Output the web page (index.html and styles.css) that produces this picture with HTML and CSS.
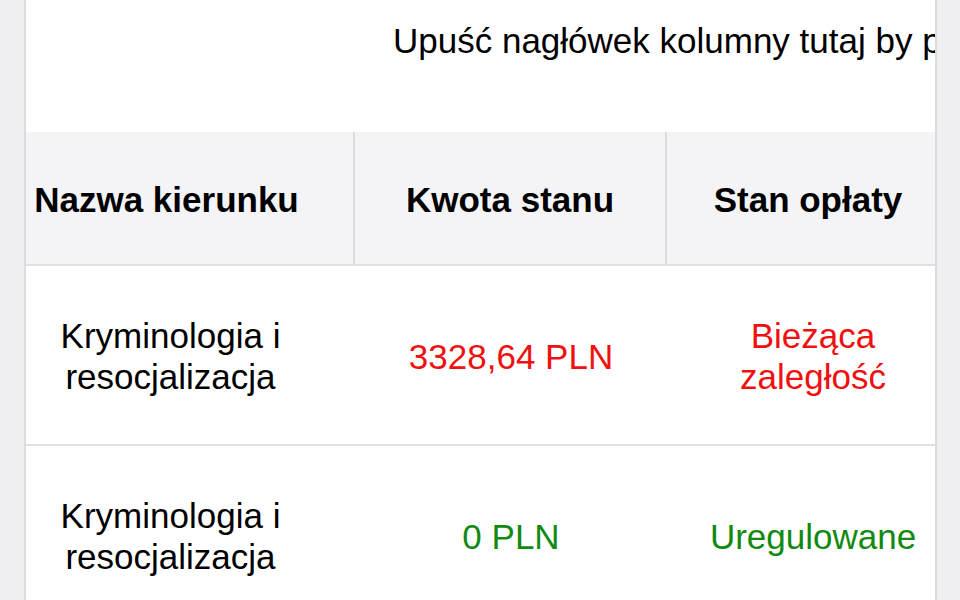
FILE: index.html
```html
<!DOCTYPE html>
<html lang="pl">
<head>
<meta charset="utf-8">
<title>Opłaty</title>
<link rel="stylesheet" href="styles.css">
</head>
<body>
<div class="frame">
  <div class="group-panel"><span class="group-text">Upuść nagłówek kolumny tutaj by pogrupować</span></div>
  <div class="grid">
    <div class="cell head c1">Nazwa kierunku</div>
    <div class="cell head c2">Kwota stanu</div>
    <div class="cell head c3">Stan opłaty</div>

    <div class="cell row c1">Kryminologia i resocjalizacja</div>
    <div class="cell row c2 red">3328,64 PLN</div>
    <div class="cell row c3 red">Bieżąca zaległość</div>

    <div class="cell row c1">Kryminologia i resocjalizacja</div>
    <div class="cell row c2 green">0 PLN</div>
    <div class="cell row c3 green">Uregulowane</div>
  </div>
</div>
</body>
</html>
```
FILE: styles.css
```css
html, body {
  margin: 0;
  padding: 0;
  height: 100%;
  overflow: hidden;
}
body {
  background: #efeff3;
  font-family: "Liberation Sans", Arial, Helvetica, sans-serif;
  font-size: 35px;
  line-height: 41px;
  color: #000;
}
.frame {
  margin-left: 24px;
  width: 909px;
  height: 700px;
  background: #fff;
  border-left: 2px solid #dcdcdf;
  border-right: 2px solid #dcdcdf;
  overflow: hidden;
}
.group-panel {
  height: 132px;
  box-sizing: border-box;
  padding: 20px 0 0 367px;
  white-space: nowrap;
  overflow: hidden;
}
.grid {
  display: grid;
  grid-template-columns: 329px 312px 292px;
  width: 933px;
}
.cell {
  display: flex;
  align-items: center;
  justify-content: center;
  text-align: center;
  box-sizing: border-box;
  border-bottom: 2px solid #e0e0e3;
}
.head {
  background: #f4f4f7;
  font-weight: bold;
  height: 134px;
  padding-top: 2px;
}
.row {
  height: 180px;
  padding-top: 2px;
}
.head.c1, .head.c2 {
  border-right: 2px solid #dcdcdf;
}
.c1 {
  padding-right: 46px;
}
.head.c3 {
  padding-right: 10px;
}
.row.c1 {
  padding-left: 33px;
  padding-right: 73px;
}
.row.c3 {
  padding-left: 60px;
  padding-right: 60px;
}
.red {
  color: #f01010;
}
.green {
  color: #118a11;
}
```
